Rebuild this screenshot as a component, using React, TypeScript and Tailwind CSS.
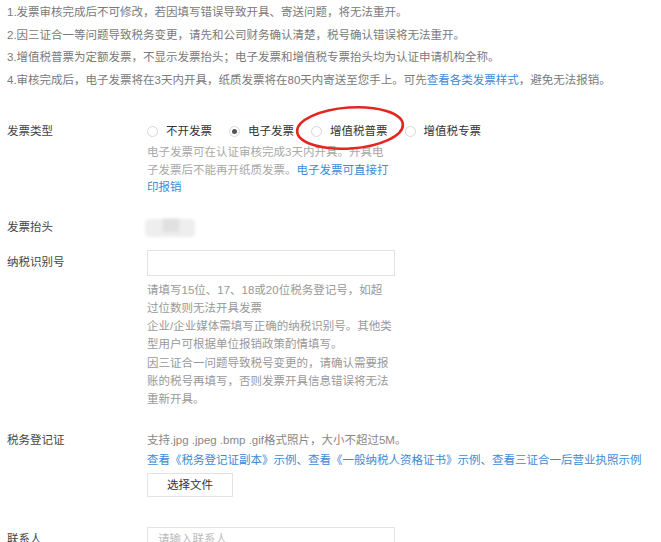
const font = "font-['Liberation_Sans','Noto_Sans_CJK_SC',sans-serif]";

const notes = [
  "1.发票审核完成后不可修改，若因填写错误导致开具、寄送问题，将无法重开。",
  "2.因三证合一等问题导致税务变更，请先和公司财务确认清楚，税号确认错误将无法重开。",
  "3.增值税普票为定额发票，不显示发票抬头；电子发票和增值税专票抬头均为认证申请机构全称。",
];

const taxHelp = [
  "请填写15位、17、18或20位税务登记号，如超",
  "过位数则无法开具发票",
  "企业/企业媒体需填写正确的纳税识别号。其他类",
  "型用户可根据单位报销政策酌情填写。",
  "因三证合一问题导致税号变更的，请确认需要报",
  "账的税号再填写，否则发票开具信息错误将无法",
  "重新开具。",
];

const invoiceTypes = [
  { label: "不开发票", checked: false },
  { label: "电子发票", checked: true },
  { label: "增值税普票", checked: false },
  { label: "增值税专票", checked: false },
];

function Radio({ checked }: { checked: boolean }) {
  return (
    <span className="w-[11px] h-[11px] rounded-full border border-[#d6d6d6] bg-white flex items-center justify-center shrink-0">
      {checked && <span className="w-[5px] h-[5px] rounded-full bg-[#555]" />}
    </span>
  );
}

function Row({ label, children, className = "" }: { label: string; children: React.ReactNode; className?: string }) {
  return (
    <div className={`flex ${className}`}>
      <div className="w-[140px] shrink-0 text-[#444] text-[11.5px]">{label}</div>
      {children}
    </div>
  );
}

export default function App() {
  return (
    <div className={`relative w-[661px] h-[542px] overflow-hidden bg-white pl-[7px] pt-[1px] ${font}`}>
      {/* notices */}
      <div className="text-[11.5px] leading-[22.5px] text-[#7a7a7a]">
        {notes.map((n) => (
          <div key={n} className="whitespace-nowrap">{n}</div>
        ))}
        <div className="whitespace-nowrap">
          4.审核完成后，电子发票将在3天内开具，纸质发票将在80天内寄送至您手上。可先
          <span className="text-[#3d8ad6]">查看各类发票样式</span>，避免无法报销。
        </div>
      </div>

      {/* invoice type */}
      <Row label="发票类型" className="mt-[29px] h-[20px] items-center pt-[3px]">
        <div className="flex items-center text-[11.5px] text-[#333]">
          {invoiceTypes.map((t, i) => (
            <div key={t.label} className={`flex items-center gap-[8px] ${i > 0 ? "ml-[17px]" : ""}`}>
              <Radio checked={t.checked} />
              <span>{t.label}</span>
            </div>
          ))}
        </div>
      </Row>
      <div className="ml-[140px] mt-[4px] text-[11.5px] leading-[17.5px] text-[#a8a8a8]">
        <div>电子发票可在认证审核完成3天内开具。开具电</div>
        <div>
          子发票后不能再开纸质发票。<span className="text-[#3d8ad6]">电子发票可直接打</span>
        </div>
        <div className="text-[#3d8ad6]">印报销</div>
      </div>

      {/* title */}
      <Row label="发票抬头" className="mt-[22px] h-[18px] items-center">
        <div className="relative w-[50px] h-[18px] -ml-[2px]">
          <div className="absolute inset-0 bg-[#eeeeee] blur-[1.5px] rounded-sm" />
          <div className="absolute left-[18px] top-0 w-[16px] h-[13px] bg-[#e0e0e0] blur-[1.5px]" />
        </div>
      </Row>

      {/* tax id */}
      <Row label="纳税识别号" className="mt-[13px] items-center">
        <div className="w-[248px] h-[26px] border border-[#e3e3e3] bg-white" />
      </Row>
      <div className="ml-[140px] mt-[5px] text-[11.5px] leading-[18.3px] text-[#999]">
        {taxHelp.map((l) => (
          <div key={l} className="whitespace-nowrap">{l}</div>
        ))}
      </div>

      {/* tax certificate */}
      <Row label="税务登记证" className="mt-[21px] leading-[20px]">
        <div className="text-[11.5px] leading-[20px]">
          <div className="text-[#888]">支持.jpg .jpeg .bmp .gif格式照片，大小不超过5M。</div>
          <div className="text-[#3d8ad6] whitespace-nowrap">
            查看《税务登记证副本》示例、查看《一般纳税人资格证书》示例、查看三证合一后营业执照示例
          </div>
          <button className="mt-[3px] w-[86px] h-[24px] border border-[#e3e3e3] bg-white text-[11.5px] text-[#333]">
            选择文件
          </button>
        </div>
      </Row>

      {/* contact */}
      <Row label="联系人" className="mt-[30px] items-center">
        <div className="w-[248px] h-[26px] border border-[#e3e3e3] bg-white px-[10px] flex items-center text-[11.5px] text-[#bbb]">
          请输入联系人
        </div>
      </Row>

      {/* red annotation ring */}
      <svg className="absolute left-[293px] top-[103px]" width="114" height="50" viewBox="0 0 114 50">
        <ellipse cx="57" cy="25" rx="53" ry="20.5" fill="none" stroke="#e3261f" strokeWidth="2.6" transform="rotate(-4 57 25)" />
      </svg>
    </div>
  );
}
